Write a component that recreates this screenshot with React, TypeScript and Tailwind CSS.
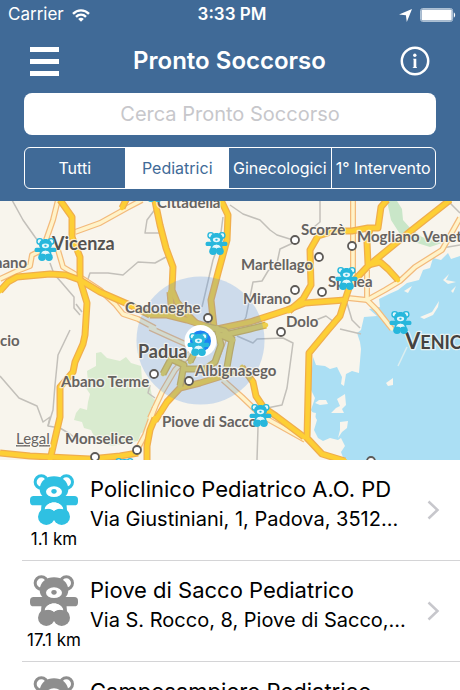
import { useState } from "react";

type Point = { x: number; y: number };

interface Hospital {
  id: number;
  name: string;
  address: string;
  distance: string;
  nearest?: boolean;
}

const FILTERS = ["Tutti", "Pediatrici", "Ginecologici", "1° Intervento"];

const HOSPITALS: Hospital[] = [
  {
    id: 1,
    name: "Policlinico Pediatrico A.O. PD",
    address: "Via Giustiniani, 1, Padova, 3512...",
    distance: "1.1 km",
    nearest: true,
  },
  {
    id: 2,
    name: "Piove di Sacco Pediatrico",
    address: "Via S. Rocco, 8, Piove di Sacco,...",
    distance: "17.1 km",
  },
  {
    id: 3,
    name: "Camposampiero Pediatrico",
    address: "Via P. Cosma, 1, Camposampiero...",
    distance: "18.6 km",
  },
];

// Map geometry, in the units of the map's own viewBox
const MINOR_ROADS = [
  "M12 200L23 220L35 237L42 246",
  "M50 263L54 274L62 283L74 297L74 308L80 315",
  "M76 304L82 312",
  "M88 279L90 273L108 273L123 275L138 262L155 263L166 257",
  "M156 208L147 220L145 233L159 233",
  "M230 205L243 214L260 220L270 230L277 235L293 240",
  "M293 243L280 249L277 263L268 271L262 281L253 282L250 297L246 317L243 323",
  "M223 217L220 240L213 260L202 307",
  "M320 201L320 222L314 227",
  "M442 248L460 245",
  "M448 201L460 213",
  "M316 320L326 316L334 322",
  "M347 303L352 320L360 328",
  "M70 330L58 355L55 385L53 410L48 426L60 428L70 434L80 442",
  "M0 376L19 398L37 406L43 422L50 417L48 426",
  "M237 336L253 343L257 339L283 338L293 343L287 388L282 405L267 408",
  "M258 427L257 460",
  "M340 329L361 334",
  "M150 385L148 393L155 398",
];

const PALE_ROADS = [
  "M58 200L53 220L46 240",
  "M75 232L100 223L127 208L142 200",
  "M0 279L17 271L30 266L32 255L42 250",
  "M58 250L63 267L80 277L100 290L115 304L123 314L138 319L155 328",
  "M353 200L353 275",
  "M460 218L442 250L415 267L400 281L385 290L367 300L348 298",
  "M367 270L367 300L377 310L392 329",
  "M223 380L242 397L262 416L305 440",
  "M150 418L162 392L175 370L193 350",
  "M155 407L145 435L137 450",
  "M227 330L222 345L214 365",
  "M150 328L172 338L190 346",
];

const MAIN_ROADS = [
  "M60 200L72 217L72 237L80 257L80 280L87 303L85 335L83 344L75 362L73 372L60 387L60 417L50 460",
  "M0 291L8 282L17 277L50 274L66 275L80 280L100 292L130 305L150 315",
  "M155 201L160 225L166 248L173 267L172 290L177 302L187 314L196 323",
  "M219 196L228 215L227 240L218 273L211 300L214 327",
  "M170 292L172 316",
  "M150 315L167 315L187 320L212 328",
  "M217 329L250 322L287 310L305 303L345 300",
  "M345 300L350 285L368 266L412 230L450 200",
  "M289 311L303 299L311 285L310 250L318 236L334 231L352 231L368 228L378 228L381 207L387 200",
  "M368 264L367 242L370 229",
  "M368 265L380 262L388 269L398 280",
  "M345 300L340 316L328 330L309 353L307 438L322 454L345 461",
  "M242 367L248 375L253 382L256 396L264 408L276 416L304 437",
  "M155 421L167 402L180 388L200 383L232 373",
  "M155 418L150 430L147 446L147 460",
  "M0 453L30 456L90 459L120 456L138 453",
  "M128 196L122 208",
];

const CITY_ROADS = [
  "M163 374L171 359L184 365L180 386",
  "M183 369L205 369L215 362L221 345L217 328",
  "M227 367L230 350L232 340L218 334",
  "M214 328L204 334L196 350L190 362",
  "M220 336L250 329L266 325",
  "M205 326L225 331L233 340",
];

const TOWN_DOTS: Point[] = [
  { x: 295, y: 240 },
  { x: 352, y: 246 },
  { x: 319, y: 257 },
  { x: 295, y: 290 },
  { x: 322, y: 292 },
  { x: 208, y: 318 },
  { x: 281, y: 332 },
  { x: 154, y: 374 },
  { x: 189, y: 381 },
  { x: 137, y: 450 },
  { x: 95, y: 457 },
  { x: 371, y: 461 },
];

const LABELS = [
  { x: 157, y: 208, text: "Cittadella" },
  { x: -14, y: 268, text: "gnano" },
  { x: 301, y: 235, text: "Scorzè" },
  { x: 357, y: 242, text: "Mogliano Veneto" },
  { x: 241, y: 270, text: "Martellago" },
  { x: 243, y: 304, text: "Mirano" },
  { x: 328, y: 287, text: "Spinea" },
  { x: 125, y: 313, text: "Cadoneghe" },
  { x: 286, y: 327, text: "Dolo" },
  { x: -16, y: 346, text: "Lucio" },
  { x: 61, y: 387, text: "Abano Terme" },
  { x: 195, y: 376, text: "Albignasego" },
  { x: 162, y: 427, text: "Piove di Sacco" },
  { x: 65, y: 444, text: "Monselice" },
];

const MARKERS: Point[] = [
  { x: 34, y: 237 },
  { x: 205, y: 231 },
  { x: 335, y: 266 },
  { x: 389, y: 310 },
  { x: 187, y: 332 },
  { x: 249, y: 403 },
  { x: 143, y: 178 },
  { x: 113, y: 457 },
];

function BearShape({ color, inner = "#ffffff" }: { color: string; inner?: string }) {
  return (
    <>
      <circle cx="34" cy="23" r="18.500" fill={inner} stroke={color} strokeWidth="9" />
      <circle cx="109" cy="23" r="18.500" fill={inner} stroke={color} strokeWidth="9" />
      <rect x="0" y="65" width="144" height="28" rx="11" fill={color} />
      <path d="M36 70H108L112 122H32Z" fill={color} />
      <path d="M72 6C96 6 114 20 115 45C115 65 98 76 72 76C46 76 29 65 29 45C30 20 48 6 72 6Z" fill={color} />
      <ellipse cx="72" cy="52" rx="24" ry="16" fill={inner} />
      <ellipse cx="72" cy="51" rx="8" ry="7" fill={color} />
      <path d="M44 105C50 78 94 78 100 105C88 101 79 104 72 109C65 104 56 101 44 105Z" fill={inner} />
      <circle cx="49" cy="127" r="25" fill={color} />
      <circle cx="95" cy="127" r="25" fill={color} />
      <path d="M44 105C50 78 94 78 100 105C88 101 79 104 72 109C65 104 56 101 44 105Z" fill={inner} />
    </>
  );
}

function Roads({
  paths,
  color,
  casing,
  width,
}: {
  paths: string[];
  color: string;
  casing: string;
  width: number;
}) {
  return (
    <g fill="none" strokeLinejoin="round">
      {paths.map((d) => (
        <path key={d} d={d} stroke={casing} strokeWidth={width + 2.5} />
      ))}
      {paths.map((d) => (
        <path key={d} d={d} stroke={color} strokeWidth={width} strokeLinecap="round" />
      ))}
    </g>
  );
}

function HospitalMap() {
  return (
    <svg
      viewBox="0 201 460 259"
      preserveAspectRatio="xMidYMid slice"
      className="block h-full w-full font-['Lato',sans-serif]"
      role="img"
      aria-label="Mappa"
    >
      <rect x="-200" y="0" width="860" height="700" fill="#f8f5ed" />

      {/* Parks */}
      <path
        d="M96 353L101 352L107 358L120 361L126 357L131 363L141 366L142 380L150 385L153 402L149 430L141 433L138 441L112 446L96 440L91 430L84 428L82 422L74 420L76 413L80 408L87 410L88 402L90 394L86 388L88 382L87 371L96 366Z"
        fill="#d9ebcf"
      />
      <path d="M387 201L397 201L402 209L403 220L411 229L422 237L442 243L430 247L414 242L400 234L391 220Z" fill="#c9e6c8" />
      <path d="M150 395L157 402L151 414Z" fill="#d9ebcf" />

      {/* Lagoon */}
      <path
        d="M460 256L451 259L448 253L441 260L433 258L430 268L423 270L419 280L407 283L398 290L389 294L379 299L380 307L369 309L377 316L364 317L361 330L357 333L360 342L361 349L359 373L352 371L346 374L344 386L341 384L342 377L337 367L330 369L325 366L316 365L313 357L311 380L311 390L315 398L311 410L317 420L314 430L318 438L323 441L330 438L338 440L341 438L345 446L341 452L344 460H700V256Z"
        fill="#abdff4"
      />
      <g fill="#f8f5ed">
        <path d="M345 394L346 405L342 409L344 413L331 413L336 408L340 406L337 399Z" />
        <path d="M319 400L326 400L328 404L320 405L315 403Z" />
        <path d="M311 412L316 413L315 420L311 420Z" />
        <path d="M340 422L348 421L347 428L342 432L338 438L340 430Z" />
        <path d="M386 383L393 378L393 385L388 386Z" />
        <path d="M420 317L432 312L439 301L438 307L433 315L424 319Z" />
        <path d="M443 280L449 274L446 280L456 282L448 284Z" />
        <path d="M451 291L456 286L453 293Z" />
        <path d="M404 291L412 286L408 293Z" />
      </g>
      <path d="M398 366L407 347" stroke="#dceef0" strokeWidth="1.5" />

      <g fill="none" stroke="#c3c0ba" strokeWidth="1.5" strokeLinejoin="round">
        {MINOR_ROADS.map((d) => (
          <path key={d} d={d} />
        ))}
      </g>
      <Roads paths={PALE_ROADS} color="#fff3c9" casing="#f3ba7c" width={3.5} />
      <Roads paths={MAIN_ROADS} color="#fdcf35" casing="#f0ae4c" width={4.5} />
      <Roads paths={CITY_ROADS} color="#eed04c" casing="#d9b045" width={4.5} />

      {/* Location accuracy */}
      <circle cx="200.5" cy="340.5" r="64" fill="#4a90e8" fillOpacity="0.25" />

      <g fill="#ffffff" stroke="#5d5a57" strokeWidth="1.8">
        {TOWN_DOTS.map((dot) => (
          <circle key={`${dot.x}-${dot.y}`} cx={dot.x} cy={dot.y} r="4" />
        ))}
      </g>

      <g
        fill="#666361"
        stroke="#fbf8f2"
        strokeWidth="2.5"
        strokeOpacity="0.75"
        strokeLinejoin="round"
        paintOrder="stroke"
        className="text-[15px] font-bold"
      >
        {LABELS.map((label) => (
          <text key={label.text} x={label.x} y={label.y}>
            {label.text}
          </text>
        ))}
        <text x="52" y="250" fill="#55524f" className="text-[18px]">
          Vicenza
        </text>
        <text x="138" y="358" fill="#55524f" className="text-[18px]">
          Padua
        </text>
        <text x="405" y="349" fill="#444240" className="text-[22px]">
          V
          <tspan className="text-[18px]">ENICE</tspan>
        </text>
        <text x="16" y="444" className="text-[15px] font-normal underline">
          Legal
        </text>
      </g>

      {/* Current position */}
      <circle cx="200.5" cy="341" r="16" fill="#ffffff" />
      <circle cx="200.5" cy="341" r="10.5" fill="#1d83f2" />

      {MARKERS.map((marker) => (
        <svg
          key={`${marker.x}-${marker.y}`}
          x={marker.x}
          y={marker.y}
          width="23"
          height="25"
          viewBox="-4 -4 152 160"
        >
          <BearShape color="#27b7dc" inner="#e3f7fb" />
        </svg>
      ))}
    </svg>
  );
}

function StatusBar() {
  return (
    <div className="grid h-[30px] grid-cols-3 items-center pr-1 pl-2 text-[17px] text-white">
      <div className="flex items-center gap-2">
        <span>Carrier</span>
        <svg width="18" height="13" viewBox="0 0 18 13" fill="none" stroke="currentColor" strokeWidth="2.4">
          <path d="M1 4.8C5.500 .2 12.500 .2 17 4.800" />
          <path d="M4 7.900C6.900 5.100 11.100 5.100 14 7.900" />
          <path d="M9 12.700L6.200 9.900C7.800 8.500 10.200 8.500 11.800 9.900Z" fill="currentColor" stroke="none" />
        </svg>
      </div>
      <span className="text-center font-semibold whitespace-nowrap">3:33 PM</span>
      <div className="flex items-center justify-end gap-2">
        <svg width="13" height="13" viewBox="0 0 13 13" fill="currentColor">
          <path d="M13 0L7.800 13L6.900 6.300L0 5.600Z" />
        </svg>
        <svg width="36" height="14" viewBox="0 0 36 14" fill="none">
          <rect x="0.600" y="0.600" width="32" height="12.800" rx="2" stroke="#b9cbdc" strokeWidth="1" />
          <rect x="1.500" y="1.500" width="30.200" height="11" rx="1" fill="#ffffff" />
          <path d="M33.800 4.500C35.600 5 35.600 9 33.800 9.500Z" fill="#ffffff" />
        </svg>
      </div>
    </div>
  );
}

export default function App() {
  const [query, setQuery] = useState("");
  const [activeFilter, setActiveFilter] = useState("Pediatrici");

  return (
    <div className="flex h-screen flex-col overflow-hidden bg-white font-['Inter',sans-serif] text-black">
      <header className="shrink-0 bg-[#406a97] pb-3">
        <StatusBar />

        <div className="flex h-[62px] items-center justify-between px-[30px]">
          <button type="button" aria-label="Menu" className="text-white">
            <svg width="29" height="29" viewBox="0 0 29 29" fill="currentColor">
              <rect width="29" height="5" />
              <rect y="12" width="29" height="5" />
              <rect y="24" width="29" height="5" />
            </svg>
          </button>
          <h1 className="text-2xl font-semibold text-white">Pronto Soccorso</h1>
          <button type="button" aria-label="Informazioni" className="text-white">
            <svg width="30" height="30" viewBox="0 0 30 30" fill="currentColor">
              <circle cx="15" cy="15" r="13.200" fill="none" stroke="currentColor" strokeWidth="2.500" />
              <circle cx="14.800" cy="9.200" r="1.700" />
              <path d="M13.200 12.800H16.300V21.200H17V22H12.800V21.200H13.600V13.600H13.200Z" />
            </svg>
          </button>
        </div>

        <div className="px-6">
          <input
            type="text"
            value={query}
            onChange={(e) => setQuery(e.target.value)}
            placeholder="Cerca Pronto Soccorso"
            aria-label="Cerca Pronto Soccorso"
            className="mt-px block h-[42px] w-full rounded-lg bg-white text-center text-xl placeholder:text-[#c7c7cb] focus:outline-none"
          />

          <div className="mt-3 grid h-[42px] grid-cols-[101fr_104fr_103fr_104fr] overflow-hidden rounded-md border border-white">
            {FILTERS.map((filter) => (
              <button
                key={filter}
                type="button"
                aria-pressed={filter === activeFilter}
                onClick={() => setActiveFilter(filter)}
                className={
                  filter === activeFilter
                    ? "bg-white text-base whitespace-nowrap text-[#406a97]"
                    : "border-r border-white text-base whitespace-nowrap text-white last:border-r-0"
                }
              >
                {filter}
              </button>
            ))}
          </div>
        </div>
      </header>

      <div className="h-[259px] shrink-0 overflow-hidden">
        <HospitalMap />
      </div>

      <ul className="min-h-0 flex-1 overflow-y-auto [scrollbar-width:none]">
        {HOSPITALS.map((hospital) => (
          <li key={hospital.id} className="pl-[22px]">
            <a href="#" className="flex h-[101px] items-start border-b border-[#d4d4d6] pr-5">
              <div className="flex w-16 shrink-0 flex-col items-center gap-1 pt-[14px]">
                <svg width="48" height="51" viewBox="0 -1 144 153">
                  <BearShape color={hospital.nearest ? "#2fc0e2" : "#8e8e8e"} />
                </svg>
                <span className="text-[17px] leading-5 whitespace-nowrap">{hospital.distance}</span>
              </div>
              <div className="ml-1 min-w-0 flex-1 pt-[14px] whitespace-nowrap">
                <div className="text-[22px] leading-[30px]">{hospital.name}</div>
                <div className="text-xl leading-[30px]">{hospital.address}</div>
              </div>
              <svg
                width="14"
                height="20"
                viewBox="0 0 14 20"
                fill="none"
                stroke="#c7c7cc"
                strokeWidth="2.500"
                className="self-center"
              >
                <path d="M2.500 1.500L11.500 10L2.500 18.500" />
              </svg>
            </a>
          </li>
        ))}
      </ul>
    </div>
  );
}
